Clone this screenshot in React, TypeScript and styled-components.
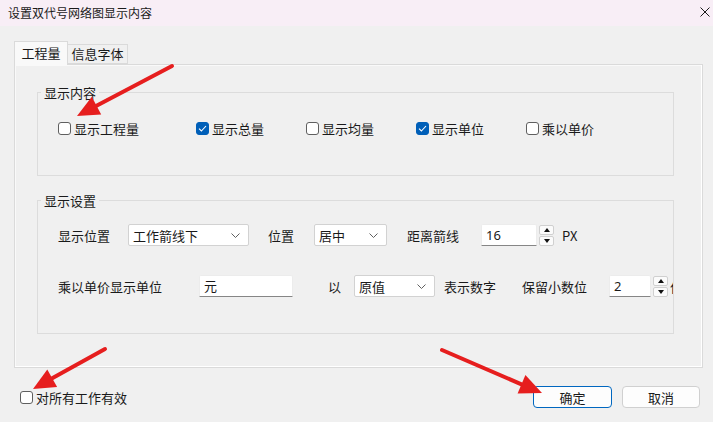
import React from 'react';
import styled, { createGlobalStyle } from 'styled-components';

const GlobalStyle = createGlobalStyle`
  html, body {
    margin: 0;
    padding: 0;
    background: #f0f0f0;
  }
  body {
    font-family: "Noto Sans CJK SC", "Noto Sans", sans-serif;
    font-size: 13px;
    color: #1a1a1a;
  }
`;

const Dialog = styled.div`
  position: relative;
  width: 713px;
  height: 422px;
  display: flex;
  flex-direction: column;
  background: #f0f0f0;
  overflow: hidden;
`;

const TitleBar = styled.div`
  height: 27px;
  box-sizing: border-box;
  display: flex;
  justify-content: space-between;
  align-items: flex-start;
  padding: 4px 3px 0 8px;
  background: #f8eef6;
  font-size: 12px;
  line-height: 17px;
`;

const CloseButton = styled.div`
  width: 10px;
  height: 10px;
  margin-top: 3px;
  display: flex;
`;

const Body = styled.div`
  flex: 1;
  display: flex;
  flex-direction: column;
  padding: 15px 10px 0 14px;
`;

const Tabs = styled.div`
  display: flex;
  align-items: flex-end;
  height: 23px;
  position: relative;
  z-index: 1;
`;

const Tab = styled.div<{ $active?: boolean }>`
  box-sizing: border-box;
  height: ${p => (p.$active ? '24px' : '20px')};
  margin-bottom: ${p => (p.$active ? '-1px' : '0')};
  width: ${p => (p.$active ? '54px' : '60px')};
  border: 1px solid #dadada;
  border-bottom: ${p => (p.$active ? 'none' : '1px solid #dadada')};
  border-left: ${p => (p.$active ? '1px solid #dadada' : 'none')};
  background: ${p => (p.$active ? '#f9f9f9' : '#f0f0f0')};
  display: flex;
  justify-content: center;
  padding-top: ${p => (p.$active ? '2px' : '0')};
  line-height: 17px;
`;

const Panel = styled.div`
  box-sizing: border-box;
  width: 689px;
  height: 304px;
  border: 1px solid #dadada;
  box-shadow: inset -1px -1px 0 #ffffff, inset 1px 1px 0 #f9f9f9;
  background: #f0f0f0;
  padding: 19px 0 0 22px;
  display: flex;
  flex-direction: column;
  gap: 16px;
`;

const GroupBox = styled.fieldset`
  margin: 0;
  padding: 0;
  min-width: 0;
  width: 637px;
  box-sizing: border-box;
  border: 1px solid #dcdcdc;
`;

const Legend = styled.legend`
  margin-left: 3px;
  padding: 0 3px;
  line-height: 17px;
`;

const GroupContent = styled.div<{ $h: number; $top: number }>`
  height: ${p => p.$h}px;
  box-sizing: border-box;
  padding: ${p => p.$top}px 0 0 20px;
  display: flex;
  flex-direction: column;
  gap: 29px;
  overflow: hidden;
`;

const Row = styled.div`
  display: flex;
  align-items: center;
  height: 22px;
  white-space: nowrap;
`;

const CheckItem = styled.label<{ $w?: number }>`
  display: flex;
  align-items: center;
  gap: 3px;
  width: ${p => (p.$w ? `${p.$w}px` : 'auto')};
  line-height: 17px;
  white-space: nowrap;
`;

const Box = styled.span<{ $checked?: boolean }>`
  width: 13px;
  height: 13px;
  box-sizing: border-box;
  border-radius: 3px;
  border: 1px solid ${p => (p.$checked ? '#005fb8' : '#5f5f5f')};
  background: ${p => (p.$checked ? '#005fb8' : '#ffffff')};
  display: flex;
  align-items: center;
  justify-content: center;
  flex: none;
`;

const Label = styled.span<{ $w?: number; $ml?: number }>`
  width: ${p => (p.$w ? `${p.$w}px` : 'auto')};
  margin-left: ${p => p.$ml ?? 0}px;
  flex: none;
  line-height: 17px;
`;

const Select = styled.div<{ $w: number }>`
  width: ${p => p.$w}px;
  height: 22px;
  box-sizing: border-box;
  border: 1px solid #d2d2d2;
  border-radius: 2px;
  background: #ffffff;
  display: flex;
  align-items: center;
  justify-content: space-between;
  padding: 0 8px 0 4px;
  flex: none;
  line-height: 17px;
`;

const TextInput = styled.div<{ $w: number }>`
  width: ${p => p.$w}px;
  height: 22px;
  box-sizing: border-box;
  border: 1px solid #ececec;
  border-bottom: 1px solid #868686;
  border-radius: 2px 2px 0 0;
  background: #ffffff;
  display: flex;
  align-items: center;
  padding: 0 4px;
  flex: none;
  line-height: 17px;
  font-family: "Noto Sans", "Noto Sans CJK SC", sans-serif;
`;

const Spinner = styled.div`
  display: flex;
  flex-direction: column;
  gap: 1px;
  margin-left: 2px;
  flex: none;
`;

const SpinButton = styled.div`
  width: 15px;
  height: 10px;
  box-sizing: border-box;
  border: 1px solid #d0d0d0;
  border-radius: 2px;
  background: #fbfbfb;
  display: flex;
  align-items: center;
  justify-content: center;
`;

const Footer = styled.div`
  height: 54px;
  display: flex;
  align-items: center;
  justify-content: space-between;
  padding: 4px 3px 0 6px;
  box-sizing: border-box;
`;

const Buttons = styled.div`
  display: flex;
  gap: 10px;
`;

const Button = styled.div<{ $primary?: boolean }>`
  width: ${p => (p.$primary ? '79px' : '78px')};
  height: 22px;
  box-sizing: border-box;
  border: 1px solid ${p => (p.$primary ? '#0067c0' : '#d0d0d0')};
  border-radius: 4px;
  background: #fdfdfd;
  display: flex;
  align-items: center;
  justify-content: center;
  line-height: 17px;
`;

const Overlay = styled.svg`
  position: absolute;
  left: 0;
  top: 0;
  pointer-events: none;
`;

const Check = () => (
  <svg width="9" height="7" viewBox="0 0 9 7">
    <path d="M1 3.6 L3.4 6 L8 1" fill="none" stroke="#fff" strokeWidth="1.1" />
  </svg>
);

const Chevron = () => (
  <svg width="9" height="5" viewBox="0 0 9 5">
    <path d="M0.5 0.5 L4.5 4.5 L8.5 0.5" fill="none" stroke="#606060" strokeWidth="1" />
  </svg>
);

function CheckBox({ label, checked, w }: { label: string; checked?: boolean; w?: number }) {
  return (
    <CheckItem $w={w}>
      <Box $checked={checked}>{checked && <Check />}</Box>
      {label}
    </CheckItem>
  );
}

function Spin() {
  return (
    <Spinner>
      <SpinButton>
        <svg width="6" height="4" viewBox="0 0 6 4"><path d="M0 4 L3 0 L6 4 Z" fill="#111" /></svg>
      </SpinButton>
      <SpinButton>
        <svg width="6" height="4" viewBox="0 0 6 4"><path d="M0 0 L3 4 L6 0 Z" fill="#111" /></svg>
      </SpinButton>
    </Spinner>
  );
}

// red annotation arrows drawn over the dialog
const arrows = [
  { x1: 172, y1: 66, bx: 96.5, by: 105.7, tip: '77,116 101.2,114.6 91.8,96.8' },
  { x1: 105, y1: 349, bx: 52.2, by: 378.3, tip: '33,389 57.1,387 47.3,369.6' },
  { x1: 442, y1: 350, bx: 521.5, by: 384.3, tip: '542,393 517.6,393.5 525.4,375.1' },
];

export default function App() {
  return (
    <>
      <GlobalStyle />
      <Dialog>
        <TitleBar>
          <span>设置双代号网络图显示内容</span>
          <CloseButton>
            <svg width="10" height="10" viewBox="0 0 10 10">
              <path d="M0.5 0.5 L9.5 9.5 M9.5 0.5 L0.5 9.5" stroke="#1a1a1a" strokeWidth="1" />
            </svg>
          </CloseButton>
        </TitleBar>
        <Body>
          <Tabs>
            <Tab $active>工程量</Tab>
            <Tab>信息字体</Tab>
          </Tabs>
          <Panel>
            <GroupBox>
              <Legend>显示内容</Legend>
              <GroupContent $h={74} $top={19}>
                <Row style={{ height: 17 }}>
                  <CheckBox label="显示工程量" w={138} />
                  <CheckBox label="显示总量" checked w={110} />
                  <CheckBox label="显示均量" w={110} />
                  <CheckBox label="显示单位" checked w={110} />
                  <CheckBox label="乘以单价" />
                </Row>
              </GroupContent>
            </GroupBox>
            <GroupBox>
              <Legend>显示设置</Legend>
              <GroupContent $h={124} $top={15}>
                <Row>
                  <Label $w={70}>显示位置</Label>
                  <Select $w={121}>工作箭线下<Chevron /></Select>
                  <Label $w={46} $ml={19}>位置</Label>
                  <Select $w={73}>居中<Chevron /></Select>
                  <Label $w={74} $ml={20}>距离箭线</Label>
                  <TextInput $w={56}>16</TextInput>
                  <Spin />
                  <Label $ml={8}>PX</Label>
                </Row>
                <Row>
                  <Label $w={141}>乘以单价显示单位</Label>
                  <TextInput $w={94}>元</TextInput>
                  <Label $w={26} $ml={35}>以</Label>
                  <Select $w={81}>原值<Chevron /></Select>
                  <Label $w={78} $ml={9}>表示数字</Label>
                  <Label $w={87}>保留小数位</Label>
                  <TextInput $w={42}>2</TextInput>
                  <Spin />
                  <Label $ml={2}>位</Label>
                </Row>
              </GroupContent>
            </GroupBox>
          </Panel>
          <Footer>
            <CheckBox label="对所有工作有效" />
            <Buttons>
              <Button $primary>确定</Button>
              <Button>取消</Button>
            </Buttons>
          </Footer>
        </Body>
        <Overlay width="713" height="422" viewBox="0 0 713 422">
          {arrows.map((a, i) => (
            <g key={i}>
              <line x1={a.x1} y1={a.y1} x2={a.bx} y2={a.by} stroke="#e61e1e" strokeWidth="4" strokeLinecap="round" />
              <polygon points={a.tip} fill="#e61e1e" />
            </g>
          ))}
        </Overlay>
      </Dialog>
    </>
  );
}
